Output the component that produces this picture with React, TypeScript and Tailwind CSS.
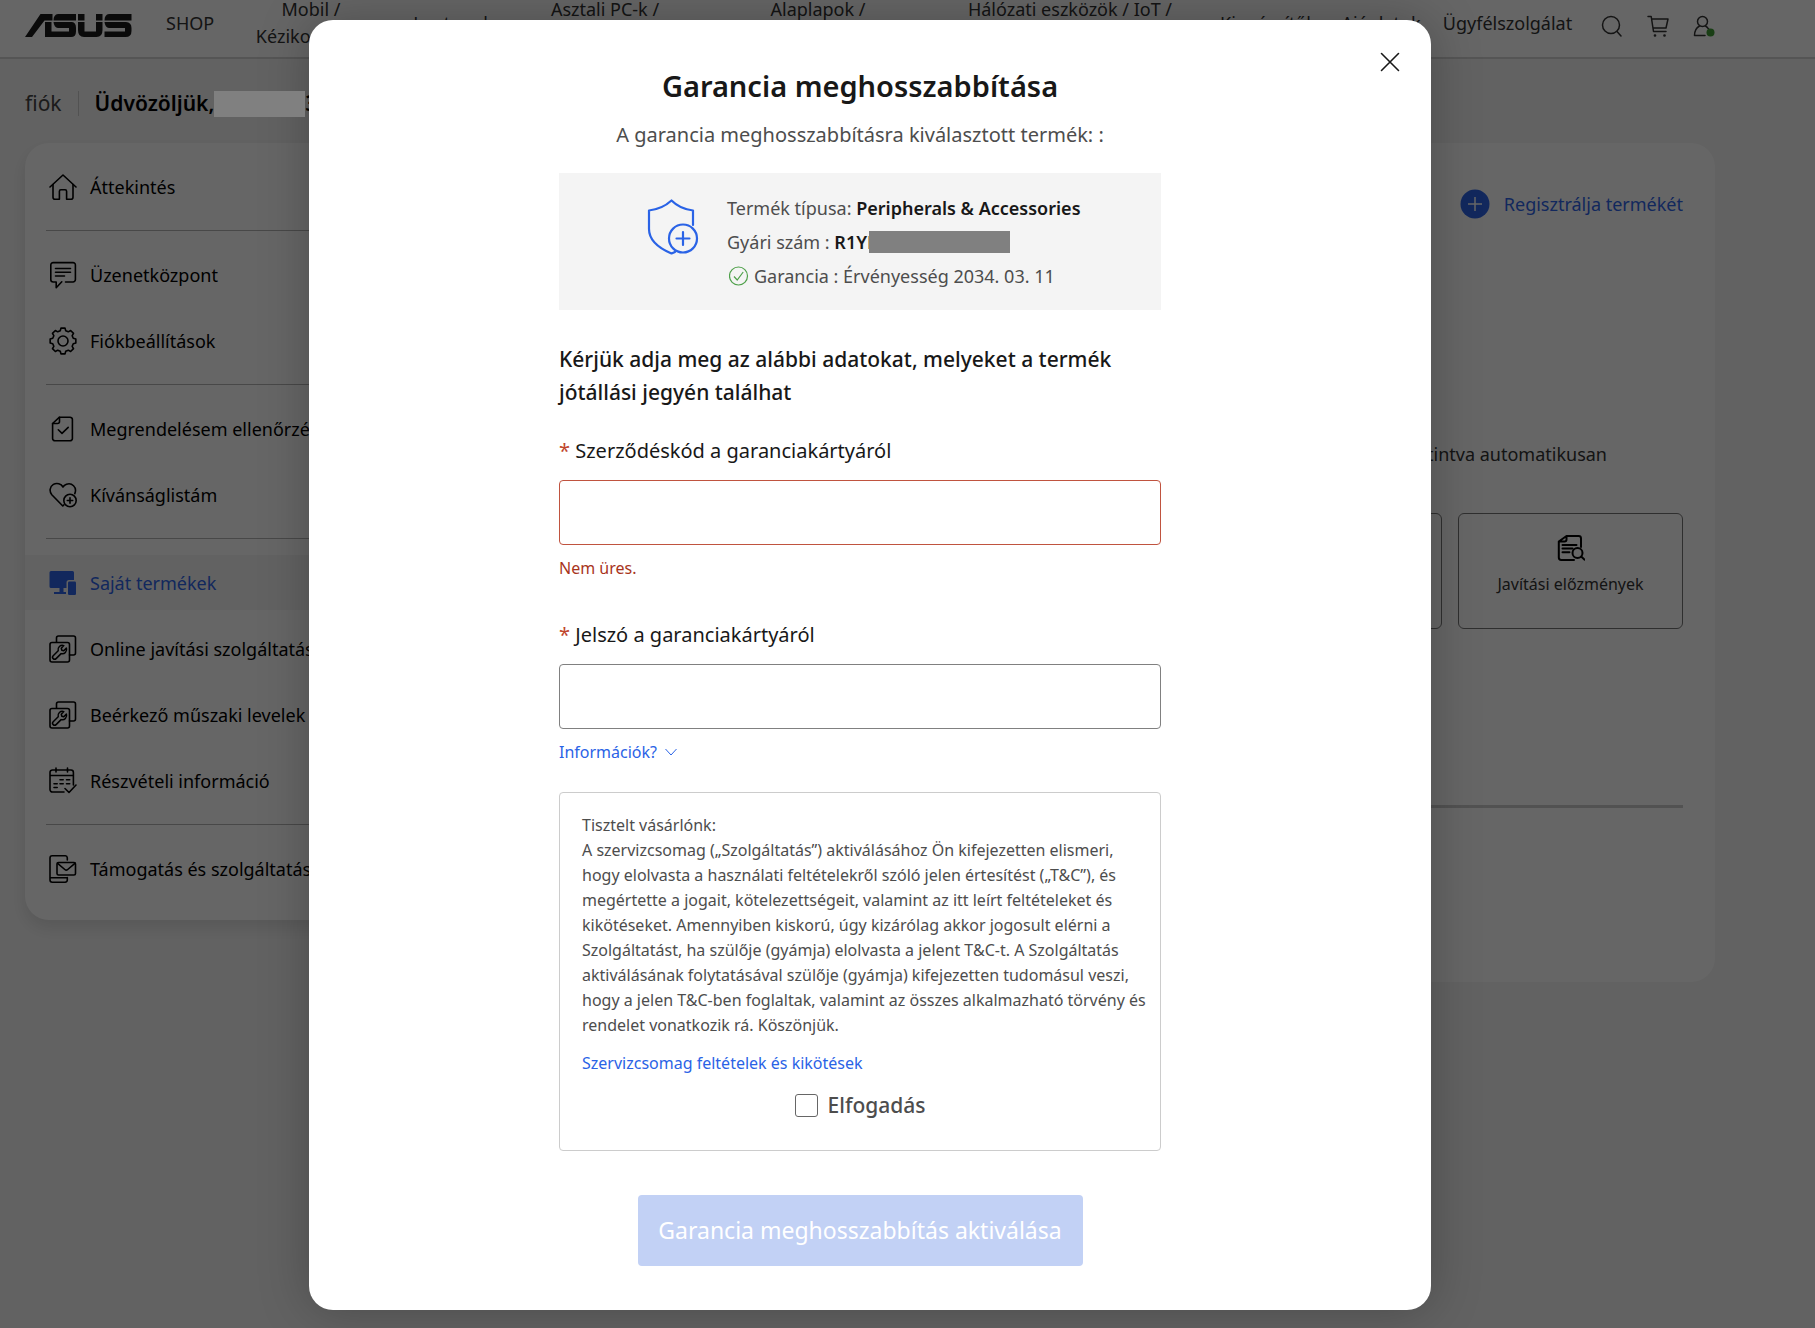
import type { ReactNode } from "react";

import clsx from "clsx";
import { useState } from "react";

interface IconProps {
  children: ReactNode;
  className?: string;
}

const Icon = ({ children, className }: IconProps) => (
  <svg
    aria-hidden="true"
    className={clsx("h-7 w-7 shrink-0", className)}
    fill="none"
    stroke="currentColor"
    strokeLinecap="round"
    strokeLinejoin="round"
    strokeWidth="1.6"
    viewBox="0 0 28 28"
  >
    {children}
  </svg>
);

const HomeIcon = () => (
  <Icon>
    <path d="M1 14 14 2l13 12" />
    <path d="M4 11.5v12.8a2 2 0 0 0 2 2h4.4v-8a1.5 1.5 0 0 1 1.5-1.5h4.2a1.5 1.5 0 0 1 1.5 1.5v8H22a2 2 0 0 0 2-2V11.5" />
  </Icon>
);

const MessageIcon = () => (
  <Icon>
    <path d="M16.5 21H24a2.4 2.4 0 0 0 2.4-2.4V4A2.4 2.4 0 0 0 24 1.6H4.2A2.4 2.4 0 0 0 1.8 4v14.6A2.4 2.4 0 0 0 4.2 21h3v5.8l5.6-6" />
    <path d="M6.5 7.5h15M6.5 11.2h15M6.5 15h9" />
  </Icon>
);

// Eight-toothed cog outline around the middle of the 28px box
const gearPoints = Array.from({ length: 8 })
  .flatMap((_, i) =>
    [
      [-15, 10.6],
      [-9, 13],
      [9, 13],
      [15, 10.6],
    ].map(([offset, radius]) => {
      const angle = ((i * 45 + offset) * Math.PI) / 180;
      return `${(14 + radius * Math.cos(angle)).toFixed(2)},${(14 + radius * Math.sin(angle)).toFixed(2)}`;
    })
  )
  .join(" ");

const GearIcon = () => (
  <Icon>
    <polygon points={gearPoints} />
    <circle cx="14" cy="14" r="5" />
  </Icon>
);

const OrderIcon = () => (
  <Icon>
    <path d="M10.5 2.2H21a2.4 2.4 0 0 1 2.4 2.4v18.8a2.4 2.4 0 0 1-2.4 2.4H6a2.4 2.4 0 0 1-2.4-2.4V8.5z" />
    <path d="M10.5 2.2v4.3a2 2 0 0 1-2 2H3.6M9.3 14.8l3.7 3.6 6.2-6" />
  </Icon>
);

const WishIcon = () => (
  <Icon>
    <path d="M25.8 12.6C28.5 6 22.5 1.3 17.5 3.2c-1.6.6-2.8 1.6-3.5 2.8C12.2 2.8 7.8 1.4 4.4 3.4.5 5.800.2 10.5 2.8 13.7L13.8 25l1.2-1.2" />
    <circle cx="21" cy="19.5" r="6.2" />
    <path d="M21 16.8v5.4M18.3 19.5h5.4" />
  </Icon>
);

const ProductsIcon = () => (
  <Icon>
    <path
      d="M2 2h21.5A1.5 1.5 0 0 1 25 3.5V11h-5a2.5 2.5 0 0 0-2.5 2.5V19h-3v4H17v2H5v-2h5.5v-4H2a1.5 1.5 0 0 1-1.5-1.5v-14A1.5 1.5 0 0 1 2 2z"
      fill="currentColor"
      stroke="none"
    />
    <rect fill="currentColor" height="13.5" rx="1.2" stroke="none" width="8" x="19" y="12.5" />
  </Icon>
);

const RepairIcon = () => (
  <Icon>
    <path d="M7.5 7V3a2 2 0 0 1 2-2h15a2 2 0 0 1 2 2v15a2 2 0 0 1-2 2h-4" />
    <rect height="19.5" rx="2" width="19.5" x="1" y="7.5" />
    <path
      d="M14.8 10.6a4.3 4.3 0 0 0-5.6 5.2l-5 4.9a2 2 0 0 0 2.9 2.9l5-5a4.3 4.3 0 0 0 5.3-5.5l-2.6 2.6-2-.5-.5-2z"
      strokeWidth="1.5"
    />
  </Icon>
);

const CalendarIcon = () => (
  <Icon>
    <path d="M15 25H3.5A2.4 2.4 0 0 1 1 22.6V5.4A2.4 2.4 0 0 1 3.5 3H22a2.4 2.4 0 0 1 2.4 2.4V18M1 8.5h23.4M7 1v4M18.5 1v4" />
    <path d="M11 12.8h3.2M17.5 12.8h3.2M5 16.8h3.2M11 16.8h3.2M17.5 16.8h3.2M5 20.5h3.2M16 21.5l4 4 7-7.5" />
  </Icon>
);

const SupportIcon = () => (
  <Icon>
    <path d="M18.3 5V2.8A2.2 2.2 0 0 0 16 .8H3.2A2.2 2.2 0 0 0 1 3v22a2.2 2.2 0 0 0 2.2 2.2H16a2.2 2.2 0 0 0 2.3-2.2v-2.5M1 22.8h17" />
    <rect height="12.5" rx="1.5" width="18.5" x="8" y="7.5" />
    <path d="m8.6 8.3 7.2 6.2a2.2 2.2 0 0 0 2.9 0l7.2-6.2" />
  </Icon>
);

const HistoryIcon = () => (
  <Icon className="text-black">
    <g strokeWidth="2">
      <path d="M24 13V4.4A2.4 2.4 0 0 0 21.6 2H9.5L1.8 7.5v16.1A2.4 2.4 0 0 0 4.2 26H17M9.5 2v3.5a2 2 0 0 1-2 2H1.8" />
      <path d="M5.5 11h14M5.5 14.5h10M5.5 18.3h7" />
      <circle cx="20.5" cy="19" r="5" />
      <path d="m24.2 22.6 3.2 3" />
    </g>
  </Icon>
);

const AsusLogo = () => (
  <svg aria-label="ASUS" className="h-6 w-[107px] shrink-0" fill="#1a1a1a" role="img" viewBox="0 0 107 24">
    <polygon points="0,23 15.5,0 27.5,0 27.5,6.5 19.5,6.5 7,23" />
    <path d="M20 8h6.5v9.5H44V14H33q-4-.5-4.5-6H47q4 .5 4 6v3.5q0 5.5-5 5.5H20z" />
    <path d="M33 0h18v6.5H28.5Q28.5.5 33 0z" />
    <path d="M53 0h6.5v6.5H53zM53 8h6.5v9.5H71V8h6.5v8q0 7-6 7H59q-6 0-6-7zM71 0h6.5v6.5H71z" />
    <path d="M84 0h22.5v6.5h-27Q79.5.5 84 0zM79.5 8H101q5.5.5 5.5 6v3q0 6-6 6h-21v-5.5H100V14H84q-4-.5-4.5-6z" />
  </svg>
);

const navItems = [
  { lines: ["SHOP"], width: "w-12" },
  { lines: ["Mobil /", "Kézikonzolok"], width: "w-[154px]" },
  { lines: ["Laptopok"], width: "w-[90px]" },
  { lines: ["Asztali PC-k /", "Monitorok"], width: "w-[174px]" },
  { lines: ["Alaplapok /", "Komponensek"], width: "w-[212px]" },
  { lines: ["Hálózati eszközök / IoT /", "Szerverek"], width: "w-[252px]" },
  { lines: ["Kiegészítők"], width: "w-[104px]" },
  { lines: ["Ajánlatok"], width: "w-[82px]" },
  { lines: ["Ügyfélszolgálat"], width: "w-[131px]" },
];

const menuGroups = [
  [{ icon: <HomeIcon />, label: "Áttekintés" }],
  [
    { icon: <MessageIcon />, label: "Üzenetközpont" },
    { icon: <GearIcon />, label: "Fiókbeállítások" },
  ],
  [
    { icon: <OrderIcon />, label: "Megrendelésem ellenőrzése" },
    { icon: <WishIcon />, label: "Kívánságlistám" },
  ],
  [
    { active: true, icon: <ProductsIcon />, label: "Saját termékek" },
    { icon: <RepairIcon />, label: "Online javítási szolgáltatások" },
    { icon: <RepairIcon />, label: "Beérkező műszaki levelek" },
    { icon: <CalendarIcon />, label: "Részvételi információ" },
  ],
  [{ icon: <SupportIcon />, label: "Támogatás és szolgáltatás" }],
];

const SiteHeader = () => (
  <header className="h-[59px] border-b-2 border-[#d4d4d4] bg-white pr-[100px] pl-[25px]">
    <div className="flex h-full items-start">
      <a className="mt-[14px]" href="#home">
        <AsusLogo />
      </a>
      <nav className="ml-[34px] flex h-[46px] items-center gap-5 text-lg leading-[27px] text-[#333]">
        {navItems.map(({ lines, width }) => (
          <a className={clsx("shrink-0 text-center", width)} href="#nav" key={lines[0]}>
            {lines.map((line) => (
              <span className="block" key={line}>
                {line}
              </span>
            ))}
          </a>
        ))}
      </nav>
      <div className="mt-[13px] ml-auto flex items-center gap-6 text-[#333]">
        <button aria-label="Keresés">
          <svg className="h-6 w-[22px]" fill="none" stroke="currentColor" strokeLinecap="round" strokeWidth="1.5" viewBox="0 0 22 24">
            <circle cx="10" cy="12" r="8.5" />
            <path d="m16 18.5 4 4.5" />
          </svg>
        </button>
        <button aria-label="Kosár">
          <svg className="h-6 w-[22px]" fill="none" stroke="currentColor" strokeLinecap="round" strokeLinejoin="round" strokeWidth="1.5" viewBox="0 0 22 24">
            <path d="M1 3.500h3.200l2.300 15H19M4.800 6H21l-2 9H6.200" />
            <circle cx="8" cy="22.500" fill="currentColor" r=".6" />
            <circle cx="17.500" cy="22.500" fill="currentColor" r=".6" />
          </svg>
        </button>
        <button aria-label="Fiók">
          <svg className="h-6 w-[22px]" fill="none" stroke="currentColor" strokeLinecap="round" strokeLinejoin="round" strokeWidth="1.5" viewBox="0 0 22 24">
            <circle cx="9.5" cy="8.500" r="5" />
            <path d="M6.500 13C3 15 1.500 18 1.500 22.500H12M12.500 13c1.500.8 2.500 2 3.200 3.200" />
            <circle cx="17.5" cy="19.5" fill="#3f9c35" r="4" stroke="none" />
          </svg>
        </button>
      </div>
    </div>
  </header>
);

const Sidebar = () => (
  <aside className="w-[370px] shrink-0 self-start rounded-3xl bg-white pb-2 shadow-[0_8px_16px_rgba(0,0,0,0.1)]">
    {menuGroups.map((group, i) => (
      <div key={i}>
        {i > 0 && <hr className="ml-[21px] border-[#b4b4b4]" />}
        <ul className="flex flex-col gap-[11px] py-4">
          {group.map((item) => (
            <li key={item.label}>
              <a
                className={clsx(
                  "flex h-[55px] items-center gap-[13px] pl-6 text-lg whitespace-nowrap",
                  "active" in item ? "bg-[#f5f5f5] text-[#2f65e8]" : "text-black"
                )}
                href="#menu"
              >
                {item.icon}
                {item.label}
              </a>
            </li>
          ))}
        </ul>
      </div>
    ))}
  </aside>
);

const ProductsPanel = () => (
  <section className="flex-1 rounded-3xl bg-white px-8 pt-11 pb-[174px]">
    <div className="flex justify-end">
      <a className="flex h-[34px] items-center gap-[14px] text-lg text-[#2f65e8]" href="#register">
        <svg aria-hidden="true" className="h-[30px] w-[30px]" viewBox="0 0 30 30">
          <circle cx="15" cy="15" fill="#2f65e8" r="14.5" />
          <path d="M15 8v14M8 15h14" stroke="#fff" strokeWidth="1.5" />
        </svg>
        Regisztrálja termékét
      </a>
    </div>
    <p className="mt-[219px] pr-[76px] text-right text-lg leading-7 text-[#333]">
      A termék adatai a gombra kattintva automatikusan
    </p>
    <div className="mt-[45px] flex justify-end gap-4">
      <button aria-label="Garancia" className="h-[116px] w-[225px] rounded-md border border-[#777]" />
      <button className="flex h-[116px] w-[225px] flex-col items-center gap-[10px] rounded-md border border-[#777] pt-5 text-base text-[#333]">
        <HistoryIcon />
        Javítási előzmények
      </button>
    </div>
    <hr className="mt-[176px] border-t-[3px] border-[#ccc]" />
  </section>
);

interface FieldProps {
  id: string;
  invalid?: boolean;
  label: string;
}

const Field = ({ id, invalid, label }: FieldProps) => (
  <div>
    <label className="block text-xl leading-8 text-[#181818]" htmlFor={id}>
      <span className="text-[#c0452c]">*</span> {label}
    </label>
    <input
      aria-invalid={invalid}
      className={clsx(
        "mt-[13px] block h-[65px] w-full rounded border px-4 text-xl outline-none",
        invalid ? "border-[#c0533f]" : "border-[#808080]"
      )}
      id={id}
      type="text"
    />
  </div>
);

const ProductSummary = () => (
  <div className="mt-[22px] flex items-start gap-7 bg-[#f4f4f4] pt-[18px] pb-[17px] pl-[88px] text-lg leading-[34px] text-[#4d4d4d]">
    <svg
      aria-hidden="true"
      className="mt-2 h-14 w-[52px] shrink-0"
      fill="none"
      stroke="#2a63e6"
      strokeLinecap="round"
      strokeLinejoin="round"
      strokeWidth="2.2"
      viewBox="0 0 52 56"
    >
      <path d="M46 26V11.5C36.5 10.5 29.5 6.5 24.5 1.5 19 6.5 11.5 10.5 2 11.5V30c0 12 9.5 19 22.5 24.5l3.5-1.600" />
      <circle cx="36" cy="39.5" r="14" />
      <path d="M36 33v13M29.5 39.5h13" />
    </svg>
    <div>
      <p>
        Termék típusa: <strong className="font-semibold text-[#181818]">Peripherals &amp; Accessories</strong>
      </p>
      <p className="flex items-center">
        Gyári szám :&nbsp;<strong className="font-semibold text-[#181818]">R1YE</strong>
        <span className="-ml-2 h-[22px] w-[141px] bg-[#808080]" />
      </p>
      <p className="flex items-center gap-[5px]">
        <svg aria-hidden="true" className="ml-[2px] h-5 w-5" fill="none" stroke="#4ea04a" strokeWidth="1.2" viewBox="0 0 20 20">
          <circle cx="9.500" cy="10" r="9" />
          <path d="m5 10.5 3.2 3.5 6-8" />
        </svg>
        Garancia : Érvényesség 2034. 03. 11
      </p>
    </div>
  </div>
);

const WarrantyDialog = () => {
  const [accepted, setAccepted] = useState(false);

  return (
    <div
      aria-labelledby="dialog-title"
      aria-modal="true"
      className="relative w-full max-w-[1122px] rounded-3xl bg-white pt-[46px] pr-5 pb-11 shadow-[0_0_50px_rgba(0,0,0,0.25)]"
      role="dialog"
    >
      <button aria-label="Bezárás" className="absolute top-[31px] right-[30px] p-px">
        <svg className="h-5 w-5" fill="none" stroke="#181818" strokeLinecap="round" strokeWidth="1.6" viewBox="0 0 20 20">
          <path d="m1.5 1.5 17 17M18.5 1.5l-17 17" />
        </svg>
      </button>
      <div className="mx-auto w-full max-w-[602px]">
        <h1 className="text-center text-[29px] leading-10 font-semibold text-[#181818]" id="dialog-title">
          Garancia meghosszabbítása
        </h1>
        <p className="mt-[13px] text-center text-xl leading-8 text-[#4d4d4d]">
          A garancia meghosszabbításra kiválasztott termék: :
        </p>
        <ProductSummary />
        <h2 className="mt-[33px] text-[21px] leading-[33px] font-medium text-[#181818]">
          Kérjük adja meg az alábbi adatokat, melyeket a termék jótállási jegyén találhat
        </h2>
        <div className="mt-[26px]">
          <Field id="contract-code" invalid label="Szerződéskód a garanciakártyáról" />
          <p className="mt-[11px] text-base text-[#a8341c]">Nem üres.</p>
        </div>
        <div className="mt-[39px]">
          <Field id="card-password" label="Jelszó a garanciakártyáról" />
          <button className="mt-[11px] flex items-center gap-2 text-base text-[#2a63e6]">
            Információk?
            <svg aria-hidden="true" className="h-3 w-3" fill="none" stroke="currentColor" viewBox="0 0 12 12">
              <path d="m.5 3 5.5 6 5.5-6" />
            </svg>
          </button>
        </div>
        <div className="mt-7 rounded border border-[#ccc] pt-5 pr-2 pb-[29px] pl-[22px]">
          <p className="text-base leading-[25px] text-[#4d4d4d]">
            Tisztelt vásárlónk:
            <br />A szervizcsomag („Szolgáltatás”) aktiválásához Ön kifejezetten elismeri, hogy elolvasta a
            használati feltételekről szóló jelen értesítést („T&amp;C”), és megértette a jogait,
            kötelezettségeit, valamint az itt leírt feltételeket és kikötéseket. Amennyiben kiskorú, úgy
            kizárólag akkor jogosult elérni a Szolgáltatást, ha szülője (gyámja) elolvasta a jelent T&amp;C-t.
            A Szolgáltatás aktiválásának folytatásával szülője (gyámja) kifejezetten tudomásul veszi, hogy a
            jelen T&amp;C-ben foglaltak, valamint az összes alkalmazható törvény és rendelet vonatkozik rá.
            Köszönjük.
          </p>
          <a className="mt-[13px] block text-base text-[#2a63e6]" href="#terms">
            Szervizcsomag feltételek és kikötések
          </a>
          <label className="mt-[14px] flex items-center justify-center gap-[10px] pr-[14px] text-[21px] leading-8 font-medium text-[#4d4d4d]">
            <input
              checked={accepted}
              className="h-[23px] w-[23px] appearance-none rounded-[3px] border border-[#666] checked:bg-[#2a63e6]"
              onChange={(e) => setAccepted(e.target.checked)}
              type="checkbox"
            />
            Elfogadás
          </label>
        </div>
        <button
          className="mx-auto mt-11 block h-[71px] w-[445px] rounded bg-[#c2d1f5] text-[23px] text-white"
          disabled={!accepted}
        >
          Garancia meghosszabbítás aktiválása
        </button>
      </div>
    </div>
  );
};

export default function App() {
  return (
    <div className="min-h-screen overflow-x-hidden bg-[#f5f5f5] font-['Noto_Sans',sans-serif]">
      <SiteHeader />
      <div className="flex h-[84px] items-center pt-[5px] pl-[25px] text-[21px]">
        <span className="text-[#444]">fiók</span>
        <span className="mx-4 h-[25px] w-px bg-[#ccc]" />
        <span className="font-semibold text-black">Üdvözöljük,</span>
        <span className="relative z-20 h-[26px] w-[91px] bg-[#808080]" />
        <span className="font-semibold text-black">3</span>
      </div>
      <main className="flex gap-8 pr-[100px] pb-16 pl-[25px]">
        <Sidebar />
        <ProductsPanel />
      </main>
      <div className="absolute inset-0 z-10 flex items-start justify-center bg-black/60 pt-5 pr-[75px]">
        <WarrantyDialog />
      </div>
    </div>
  );
}
